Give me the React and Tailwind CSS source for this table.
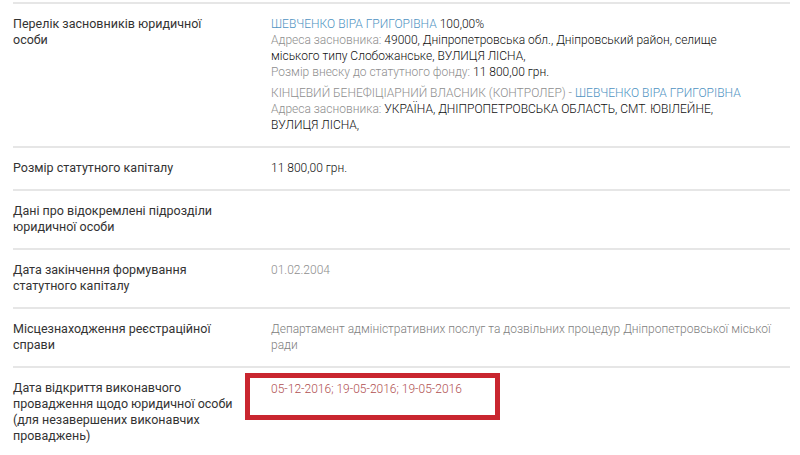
const font = { fontFamily: "Roboto, 'Noto Sans', sans-serif" };

function Row({ label, children }) {
  return (
    <div className="flex border-t-2 border-[#e6e6e6] pt-[12px] pb-[13px]">
      <div className="w-[225px] shrink-0 text-[12.5px] text-[#333]">{label}</div>
      <div className="ml-[33px] flex-1 pr-[10px] text-[12px]">{children}</div>
    </div>
  );
}

const Blue = ({ children }) => <span className="font-light text-[#4f93c2]">{children}</span>;
const Grey = ({ children }) => <span className="font-light text-[#8e8e8e]">{children}</span>;
const Dark = ({ children }) => <span className="font-light text-[#111]">{children}</span>;

export default function App() {
  return (
    <div className="h-[455px] w-[800px] overflow-hidden bg-white" style={font}>
      <div className="ml-[13px] mr-[10px] mt-[2px] leading-[16px]">
        <Row label="Перелік засновників юридичної особи">
          <p>
            <Blue>ШЕВЧЕНКО ВІРА ГРИГОРІВНА</Blue> <Dark>100,00%</Dark>
          </p>
          <p>
            <Grey>Адреса засновника:</Grey>{" "}
            <Dark>
              49000, Дніпропетровська обл., Дніпровський район, селище
              <br />
              міського типу Слобожанське, ВУЛИЦЯ ЛІСНА,
            </Dark>
          </p>
          <p>
            <Grey>Розмір внеску до статутного фонду:</Grey> <Dark>11 800,00 грн.</Dark>
          </p>
          <p className="mt-[5px]">
            <Grey>КІНЦЕВИЙ БЕНЕФІЦІАРНИЙ ВЛАСНИК (КОНТРОЛЕР) - </Grey>
            <Blue>ШЕВЧЕНКО ВІРА ГРИГОРІВНА</Blue>
          </p>
          <p>
            <Grey>Адреса засновника:</Grey>{" "}
            <Dark>
              УКРАЇНА, ДНІПРОПЕТРОВСЬКА ОБЛАСТЬ, СМТ. ЮВІЛЕЙНЕ,
              <br />
              ВУЛИЦЯ ЛІСНА,
            </Dark>
          </p>
        </Row>

        <Row label="Розмір статутного капіталу">
          <Dark>11 800,00 грн.</Dark>
        </Row>

        <Row label="Дані про відокремлені підрозділи юридичної особи">
          <span />
        </Row>

        <Row label="Дата закінчення формування статутного капіталу">
          <Grey>01.02.2004</Grey>
        </Row>

        <Row label="Місцезнаходження реєстраційної справи">
          <p className="font-light text-[#808080]">
            Департамент адміністративних послуг та дозвільних процедур Дніпропетровської міської
            <br />
            ради
          </p>
        </Row>

        <Row label="Дата відкриття виконавчого провадження щодо юридичної особи (для незавершених виконавчих проваджень)">
          <div className="-ml-[26px] -mt-[7px] w-[255px] border-[5px] border-[#c9262f] pb-[18px] pl-[21px] pt-[3px]">
            <span className="font-light text-[#b04f50]">05-12-2016; 19-05-2016; 19-05-2016</span>
          </div>
        </Row>
      </div>
    </div>
  );
}
